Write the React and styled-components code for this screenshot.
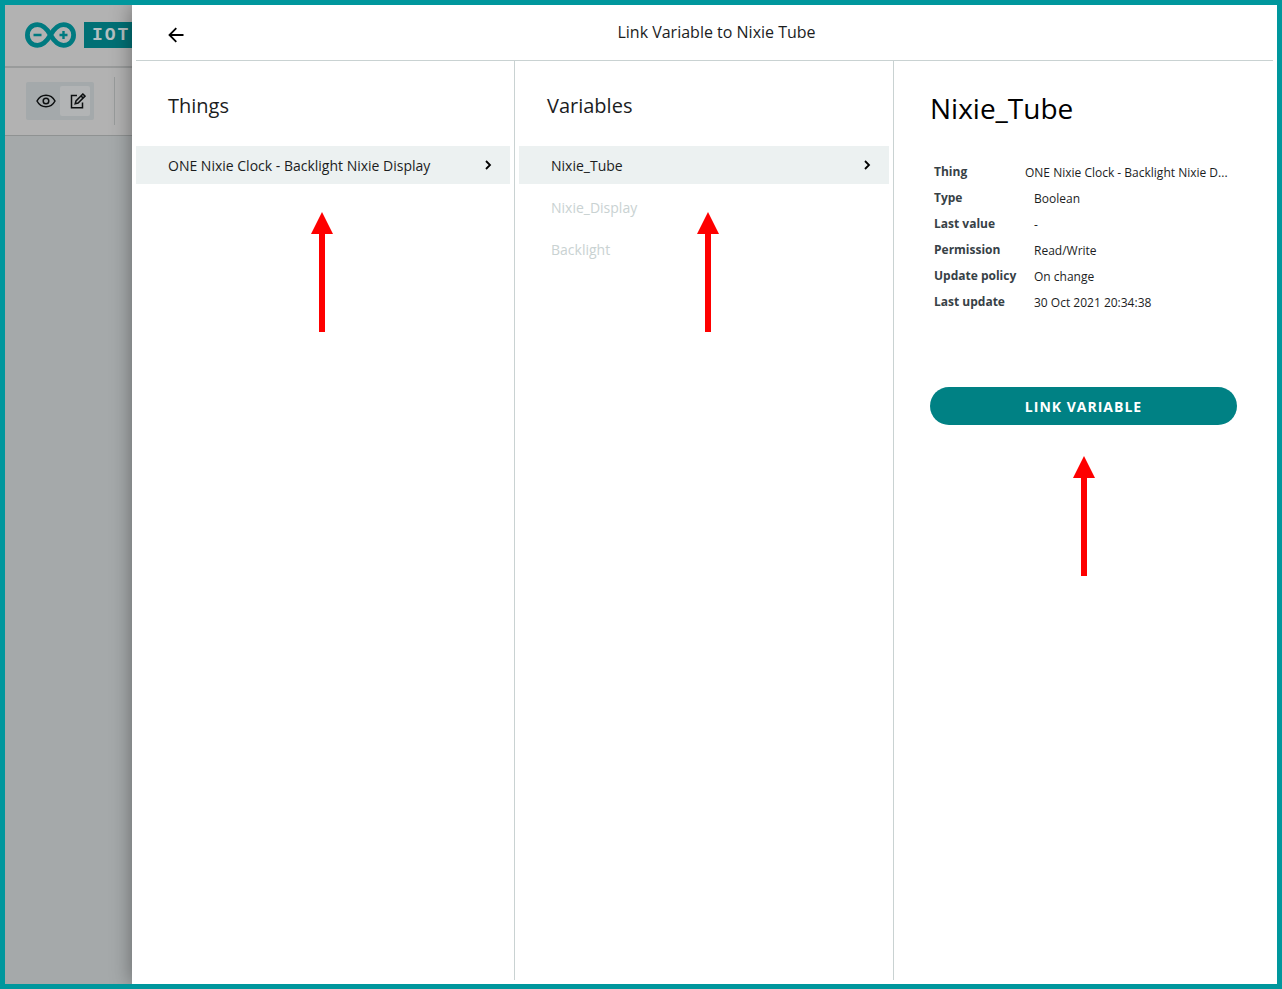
import React from "react";
import styled, { createGlobalStyle, css } from "styled-components";

const GlobalStyle = createGlobalStyle`
  *, *::before, *::after { box-sizing: border-box; }
  body {
    margin: 0;
    font-family: "Open Sans", "Noto Sans", sans-serif;
    color: #1b1d1e;
    background: #fff;
  }
  h1, h2, h3, ul, p { margin: 0; padding: 0; font-weight: 400; }
  button { font-family: inherit; border: 0; margin: 0; cursor: pointer; }
  svg { display: block; flex: none; }
`;

const Frame = styled.div`
  display: grid;
  grid-template-columns: 127px minmax(0, 1fr);
  min-height: 100vh;
  border: 5px solid #00979d;
  overflow: hidden;
`;

const Backdrop = styled.div`
  display: flex;
  flex-direction: column;
  overflow: hidden;
  background: #a5a9aa;
`;

const BrandBar = styled.header`
  display: flex;
  align-items: center;
  gap: 8px;
  height: 63px;
  padding: 0 0 1px 20px;
  background: #b2b2b2;
  border-bottom: 2px solid #999b9b;
`;

const BrandTag = styled.span`
  flex: none;
  padding: 0 8px;
  font: 700 18px/26px "Liberation Mono", monospace;
  letter-spacing: 2px;
  color: #b4bfc0;
  background: #007075;
`;

const Toolbar = styled.div`
  display: flex;
  align-items: center;
  gap: 20px;
  height: 68px;
  padding: 0 0 2px 21px;
  background: #b2b2b2;
  border-bottom: 1px solid #8f9292;
`;

const ModeSwitch = styled.div`
  display: flex;
  flex: none;
  width: 68px;
  padding: 4px;
  border-radius: 2px;
  background: #a4a9ab;
`;

const ModeButton = styled.button`
  display: flex;
  align-items: center;
  justify-content: flex-end;
  width: 30px;
  height: 30px;
  padding: 0 4px;
  border-radius: 2px;
  color: #0c0f10;
  background: ${(p) => (p.$active ? "#b2b4b5" : "transparent")};
`;

const Divider = styled.span`
  width: 1px;
  height: 48px;
  background: #989b9b;
`;

const Dialog = styled.section`
  position: relative;
  display: flex;
  flex-direction: column;
  padding: 4px;
  background: #fff;
  box-shadow: 0 0 20px rgba(0, 0, 0, 0.4);
`;

const DialogHeader = styled.header`
  display: grid;
  grid-template-columns: 80px 1fr 56px;
  align-items: center;
  height: 52px;
  border-bottom: 1px solid #c9d2d2;
`;

const BackButton = styled.button`
  justify-self: center;
  padding: 0;
  color: #000;
  background: none;
`;

const DialogTitle = styled.h1`
  padding-bottom: 6px;
  font-size: 16px;
  line-height: 24px;
  text-align: center;
`;

const Columns = styled.div`
  display: grid;
  grid-template-columns: repeat(3, minmax(0, 1fr));
  flex: 1;
`;

const Column = styled.section`
  position: relative;
  &:not(:last-child) { border-right: 1px solid #c9d2d2; }
`;

const ColumnTitle = styled.h2`
  padding: 31px 32px 26px;
  font-size: 20px;
  line-height: 28px;
`;

const OptionList = styled.ul`
  display: flex;
  flex-direction: column;
  gap: 4px;
  padding: 0 4px 0 ${(p) => (p.$inset ? "4px" : "0")};
  list-style: none;
`;

const Option = styled.button`
  display: flex;
  align-items: center;
  justify-content: space-between;
  width: 100%;
  height: 38px;
  padding: 0 17px 0 32px;
  font-size: 14px;
  line-height: 20px;
  text-align: left;
  color: #1b1d1e;
  background: transparent;
  ${(p) => p.$selected && css`background: #ecf1f1;`}
  &:disabled { color: #c9d2d2; cursor: default; }
`;

const OptionLabel = styled.span`
  padding-top: 2px;
`;

const Details = styled.div`
  display: flex;
  flex-direction: column;
  padding: 23px 36px 0;
`;

const DetailsTitle = styled.h2`
  margin-bottom: 28px;
  font-size: 28px;
  line-height: 48px;
  color: #000;
`;

const Facts = styled.table`
  width: 100%;
  margin-bottom: 71px;
  table-layout: fixed;
  border-collapse: collapse;
  font-size: 12px;
  line-height: 20px;
`;

const FactName = styled.th`
  width: 95px;
  height: 26px;
  padding: 0 0 2px 4px;
  text-align: left;
  font-weight: 700;
  white-space: nowrap;
  color: #374146;
`;

const FactValue = styled.td`
  height: 26px;
  padding: 0 4px 0 ${(p) => (p.$long ? "0" : "9px")};
  white-space: nowrap;
`;

const LinkButton = styled.button`
  height: 38px;
  padding: 2px 24px 0;
  border-radius: 19px;
  font-size: 14px;
  font-weight: 700;
  line-height: 20px;
  letter-spacing: 1px;
  color: #fff;
  background: #008184;
`;

const Pointer = styled.svg`
  position: absolute;
  top: ${(p) => p.$top}px;
  left: ${(p) => p.$left}px;
`;

const PointerArrow = ({ top, left }) => (
  <Pointer $top={top} $left={left} width="22" height="120" viewBox="0 0 22 120" aria-hidden="true">
    <path d="M11 0 22 22H14V120H8V22H0Z" fill="#fe0000" />
  </Pointer>
);

const Logo = () => (
  <svg width="51" height="26" viewBox="0 0 51 26" fill="none" stroke="#007a80" aria-hidden="true">
    <path
      d="M25.5 13C22 7 18.500 2.700 12.500 2.700C6.500 2.700 2.400 7.300 2.400 13S6.500 23.300 12.500 23.300C18.500 23.300 22 19 25.500 13S32.500 2.700 38.500 2.700S48.600 7.300 48.600 13S44.500 23.300 38.500 23.300S29 19 25.500 13Z"
      strokeWidth="4.800"
    />
    <path d="M8.500 13h8M34.500 13h8M38.500 9v8" strokeWidth="2.400" />
  </svg>
);

const EyeIcon = () => (
  <svg width="20" height="14" viewBox="0 0 20 14" fill="none" stroke="currentColor" strokeWidth="1.500" aria-hidden="true">
    <path d="M1 7C3 3.200 6.200 1.200 10 1.200S17 3.200 19 7C17 10.800 13.800 12.800 10 12.800S3 10.800 1 7Z" />
    <circle cx="10" cy="7" r="2.800" />
  </svg>
);

const EditIcon = () => (
  <svg width="16" height="16" viewBox="0 0 16 16" fill="none" stroke="currentColor" strokeWidth="1.500" aria-hidden="true">
    <path d="M7 2.500H1.500V14.700H12.500V9.500" />
    <path d="M5.200 10.800 6 7.900 12.900 1 15 3.100 8.100 10Z" />
    <path d="M11 2.900 13.100 5" />
  </svg>
);

const BackIcon = () => (
  <svg width="16" height="16" viewBox="0 0 16 16" fill="none" stroke="currentColor" strokeWidth="1.800" aria-hidden="true">
    <path d="M15.500 8H2M8.300 1.200 1.500 8 8.300 14.800" />
  </svg>
);

const ChevronIcon = () => (
  <svg width="10" height="10" viewBox="0 0 10 10" fill="none" stroke="#000" strokeWidth="1.800" aria-hidden="true">
    <path d="M3 1 7 5 3 9" />
  </svg>
);

const facts = [
  ["Thing", "ONE Nixie Clock - Backlight Nixie D..."],
  ["Type", "Boolean"],
  ["Last value", "-"],
  ["Permission", "Read/Write"],
  ["Update policy", "On change"],
  ["Last update", "30 Oct 2021 20:34:38"],
];

export default function App() {
  return (
    <>
      <GlobalStyle />
      <Frame>
        <Backdrop>
          <BrandBar>
            <Logo />
            <BrandTag>IOT</BrandTag>
          </BrandBar>
          <Toolbar>
            <ModeSwitch>
              <ModeButton aria-label="Preview"><EyeIcon /></ModeButton>
              <ModeButton aria-label="Edit" $active><EditIcon /></ModeButton>
            </ModeSwitch>
            <Divider />
          </Toolbar>
        </Backdrop>

        <Dialog role="dialog" aria-labelledby="dialog-title">
          <DialogHeader>
            <BackButton aria-label="Back"><BackIcon /></BackButton>
            <DialogTitle id="dialog-title">Link Variable to Nixie Tube</DialogTitle>
          </DialogHeader>
          <Columns>
            <Column>
              <ColumnTitle>Things</ColumnTitle>
              <OptionList>
                <li>
                  <Option $selected>
                    <OptionLabel>ONE Nixie Clock - Backlight Nixie Display</OptionLabel>
                    <ChevronIcon />
                  </Option>
                </li>
              </OptionList>
              <PointerArrow top={151} left={175} />
            </Column>

            <Column>
              <ColumnTitle>Variables</ColumnTitle>
              <OptionList $inset>
                <li>
                  <Option $selected>
                    <OptionLabel>Nixie_Tube</OptionLabel>
                    <ChevronIcon />
                  </Option>
                </li>
                <li><Option disabled><OptionLabel>Nixie_Display</OptionLabel></Option></li>
                <li><Option disabled><OptionLabel>Backlight</OptionLabel></Option></li>
              </OptionList>
              <PointerArrow top={151} left={182} />
            </Column>

            <Column>
              <Details>
                <DetailsTitle>Nixie_Tube</DetailsTitle>
                <Facts>
                  <tbody>
                    {facts.map(([name, value]) => (
                      <tr key={name}>
                        <FactName scope="row">{name}</FactName>
                        <FactValue $long={value.length > 30}>{value}</FactValue>
                      </tr>
                    ))}
                  </tbody>
                </Facts>
                <LinkButton>LINK VARIABLE</LinkButton>
              </Details>
              <PointerArrow top={395} left={179} />
            </Column>
          </Columns>
        </Dialog>
      </Frame>
    </>
  );
}
